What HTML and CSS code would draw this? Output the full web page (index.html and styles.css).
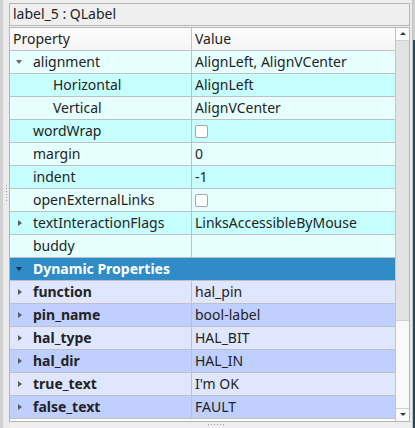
FILE: index.html
```html
<!DOCTYPE html>
<html>
<head>
<meta charset="utf-8">
<link rel="stylesheet" href="styles.css">
</head>
<body>
<div class="window">
  <div class="left-strip"><div class="vdots"></div></div>
  <div class="main">
    <div class="objname">label_5 : QLabel</div>
    <div class="tree">
      <div class="view">
        <div class="header">
          <div class="hcell prop">Property</div>
          <div class="hcell val">Value</div>
        </div>
        <div class="row light"><div class="pcell"><span class="branch"><span class="arrow-down"></span></span><span class="name">alignment</span></div><div class="vcell">AlignLeft, AlignVCenter</div></div>
        <div class="row dark"><div class="pcell"><span class="branch sub"></span><span class="name">Horizontal</span></div><div class="vcell">AlignLeft</div></div>
        <div class="row light"><div class="pcell"><span class="branch sub"></span><span class="name">Vertical</span></div><div class="vcell">AlignVCenter</div></div>
        <div class="row dark"><div class="pcell"><span class="branch"></span><span class="name">wordWrap</span></div><div class="vcell"><span class="check"></span></div></div>
        <div class="row light"><div class="pcell"><span class="branch"></span><span class="name">margin</span></div><div class="vcell">0</div></div>
        <div class="row dark"><div class="pcell"><span class="branch"></span><span class="name">indent</span></div><div class="vcell">-1</div></div>
        <div class="row light"><div class="pcell"><span class="branch"></span><span class="name">openExternalLinks</span></div><div class="vcell"><span class="check"></span></div></div>
        <div class="row dark"><div class="pcell"><span class="branch"><span class="arrow-right"></span></span><span class="name">textInteractionFlags</span></div><div class="vcell">LinksAccessibleByMouse</div></div>
        <div class="row light"><div class="pcell"><span class="branch"></span><span class="name">buddy</span></div><div class="vcell"></div></div>
        <div class="row group"><span class="branch"><span class="arrow-down navy"></span></span><span class="name">Dynamic Properties</span></div>
        <div class="row dlight"><div class="pcell"><span class="branch"><span class="arrow-right"></span></span><span class="name bold">function</span></div><div class="vcell">hal_pin</div></div>
        <div class="row ddark"><div class="pcell"><span class="branch"><span class="arrow-right"></span></span><span class="name bold">pin_name</span></div><div class="vcell">bool-label</div></div>
        <div class="row dlight"><div class="pcell"><span class="branch"><span class="arrow-right"></span></span><span class="name bold">hal_type</span></div><div class="vcell">HAL_BIT</div></div>
        <div class="row ddark"><div class="pcell"><span class="branch"><span class="arrow-right"></span></span><span class="name bold">hal_dir</span></div><div class="vcell">HAL_IN</div></div>
        <div class="row dlight"><div class="pcell"><span class="branch"><span class="arrow-right"></span></span><span class="name bold">true_text</span></div><div class="vcell">I'm OK</div></div>
        <div class="row ddark"><div class="pcell"><span class="branch"><span class="arrow-right"></span></span><span class="name bold">false_text</span></div><div class="vcell">FAULT</div></div>
      </div>
      <div class="scrollbar">
        <div class="sb-btn up"><span class="sb-arrow-up"></span></div>
        <div class="sb-thumb"></div>
        <div class="sb-track"></div>
        <div class="sb-btn down"><span class="sb-arrow-down"></span></div>
      </div>
    </div>
    <div class="bottom-handle"><div class="hdots"></div></div>
  </div>
  <div class="right-strip"></div>
</div>
</body>
</html>
```

FILE: styles.css
```css
* { box-sizing: border-box; }
html, body {
  margin: 0;
  padding: 0;
  width: 415px;
  height: 428px;
  overflow: hidden;
  background: #efefef;
  font-family: "Noto Sans", "DejaVu Sans", sans-serif;
  font-size: 14px;
  color: #232323;
}
.window {
  display: flex;
  width: 415px;
  height: 428px;
}
.left-strip {
  width: 9px;
  background: linear-gradient(to right, #d0d0d0 0 3px, #ebebeb 3px);
  display: flex;
  justify-content: flex-end;
  padding-top: 185px;
  padding-right: 2px;
}
.vdots {
  width: 1px;
  height: 16px;
  background: repeating-linear-gradient(to bottom, #a0a0a0 0 1px, transparent 1px 3px);
}
.main {
  width: 401px;
  display: flex;
  flex-direction: column;
  padding-top: 3px;
}
.objname {
  height: 23px;
  border: 1px solid #b6b6b6;
  background: #efefef;
  padding-left: 3px;
  line-height: 20px;
  white-space: nowrap;
}
.tree {
  margin-top: 1px;
  height: 395px;
  border: 1px solid #b4b4b4;
  display: flex;
  background: #ffffff;
}
.view {
  width: 385px;
  display: flex;
  flex-direction: column;
}
.header {
  display: flex;
  height: 23px;
  border-bottom: 1px solid #c2c2c2;
  background: linear-gradient(#fdfdfd, #f4f4f4);
}
.hcell {
  line-height: 22px;
  padding-left: 3px;
  white-space: nowrap;
}
.hcell.prop {
  width: 182px;
  border-right: 1px solid #c2c2c2;
}
.hcell.val { flex: 1; }
.row {
  display: flex;
  height: 23px;
  border-bottom: 1px solid #c0c0c0;
  line-height: 22px;
  white-space: nowrap;
}
.row.light { background: #e6ffff; }
.row.dark { background: #c7ffff; }
.row.dlight { background: #dfe6ff; }
.row.ddark { background: #bfcfff; }
.row.group {
  background: #308cc6;
  color: #ffffff;
  font-weight: bold;
  align-items: center;
}
.pcell {
  width: 182px;
  border-right: 1px solid #c0c0c0;
  display: flex;
  align-items: center;
}
.vcell {
  flex: 1;
  padding-left: 3px;
  display: flex;
  align-items: center;
}
.branch {
  width: 20px;
  height: 22px;
  flex: none;
  display: flex;
  align-items: center;
}
.branch.sub { width: 40px; }
.name { padding-left: 3px; }
.name.bold { font-weight: bold; }
.arrow-down {
  margin-left: 6px;
  width: 0;
  height: 0;
  border-left: 3px solid transparent;
  border-right: 3px solid transparent;
  border-top: 4px solid #6a6a6a;
}
.arrow-down.navy { border-top-color: #142c44; margin-left: 6px; }
.arrow-right {
  margin-left: 8px;
  width: 0;
  height: 0;
  border-top: 3.5px solid transparent;
  border-bottom: 3.5px solid transparent;
  border-left: 4px solid #5c5c5c;
}
.check {
  width: 13px;
  height: 13px;
  border: 1px solid #a4a4a4;
  border-radius: 2px;
  background: #ffffff;
}
.scrollbar {
  width: 14px;
  border-left: 1px solid #c4c4c4;
  display: flex;
  flex-direction: column;
  background: #f8f8f8;
}
.sb-btn {
  height: 13px;
  background: #fbfbfb;
  display: flex;
  justify-content: center;
  flex: none;
}
.sb-btn.up { border-bottom: 1px solid #d0d0d0; align-items: flex-start; padding-top: 4px; height: 13px; }
.sb-btn.down { border-top: 1px solid #d0d0d0; padding-top: 4px; }
.sb-arrow-up {
  width: 0;
  height: 0;
  border-left: 3px solid transparent;
  border-right: 3px solid transparent;
  border-bottom: 3px solid #3c3c3c;
}
.sb-arrow-down {
  width: 0;
  height: 0;
  border-left: 3px solid transparent;
  border-right: 3px solid transparent;
  border-top: 3px solid #3c3c3c;
}
.sb-thumb {
  height: 280px;
  background: #e3e3e3;
  border-bottom: 1px solid #cfcfcf;
  flex: none;
}
.sb-track { flex: 1; background: #f9f9f9; }
.bottom-handle {
  flex: 1;
  display: flex;
  justify-content: center;
  padding-top: 2px;
}
.hdots {
  width: 16px;
  height: 1px;
  margin-left: 12px;
  background: repeating-linear-gradient(to right, #a0a0a0 0 1px, transparent 1px 3px);
}
.right-strip {
  width: 5px;
  background:
    linear-gradient(to bottom, transparent 0 40px, #23485a 40px) right / 2px 100% no-repeat,
    linear-gradient(to right, #ebebeb 0 2px, #c4c4c4 2px 3px, #d0d0d0 3px);
}
```
